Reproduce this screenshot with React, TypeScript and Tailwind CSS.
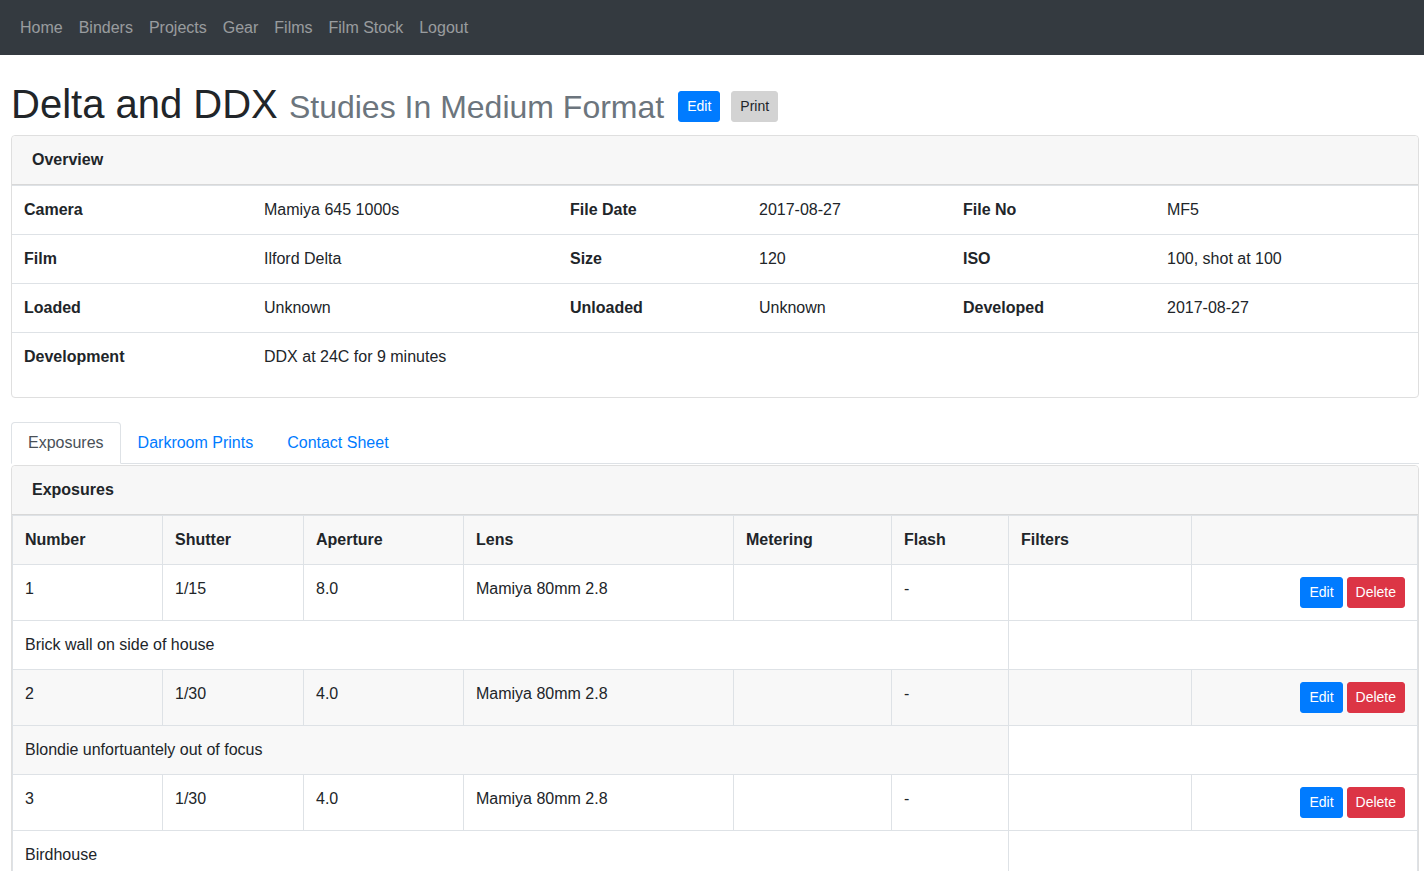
// App.tsx - film roll detail page: overview card + exposures table.
import React from "react";

const navLinks = ["Home", "Binders", "Projects", "Gear", "Films", "Film Stock", "Logout"];

const overview: [string, string, string?, string?, string?, string?][] = [
    ["Camera", "Mamiya 645 1000s", "File Date", "2017-08-27", "File No", "MF5"],
    ["Film", "Ilford Delta", "Size", "120", "ISO", "100, shot at 100"],
    ["Loaded", "Unknown", "Unloaded", "Unknown", "Developed", "2017-08-27"],
    ["Development", "DDX at 24C for 9 minutes"],
];

interface Exposure {
    number: string;
    shutter: string;
    aperture: string;
    lens: string;
    metering: string;
    flash: string;
    filters: string;
    notes: string;
}

const exposures: Exposure[] = [
    { number: "1", shutter: "1/15", aperture: "8.0", lens: "Mamiya 80mm 2.8", metering: "", flash: "-", filters: "", notes: "Brick wall on side of house" },
    { number: "2", shutter: "1/30", aperture: "4.0", lens: "Mamiya 80mm 2.8", metering: "", flash: "-", filters: "", notes: "Blondie unfortuantely out of focus" },
    { number: "3", shutter: "1/30", aperture: "4.0", lens: "Mamiya 80mm 2.8", metering: "", flash: "-", filters: "", notes: "Birdhouse" },
];

const headers = ["Number", "Shutter", "Aperture", "Lens", "Metering", "Flash", "Filters", ""];

// small bootstrap-ish button (1px border in the same colour)
const btn = "rounded-[3px] border px-2 py-1 text-[14px] leading-[21px]";

const Navbar = () => (
    <nav className="flex h-[55px] items-center bg-[#343a40] pl-3">
        {navLinks.map((link) => (
            <a key={link} href="#" className="px-2 text-base leading-6 text-white/50">
                {link}
            </a>
        ))}
    </nav>
);

const OverviewCard = () => (
    <div className="rounded border border-[#dfdfdf] bg-white">
        <div className="rounded-t border-b border-[#d8d8d8] bg-[#f7f7f7] px-5 py-3 font-bold leading-6">
            Overview
        </div>
        <table className="mb-4 w-full table-fixed border-collapse">
            <colgroup>
                <col className="w-[240px]" />
                <col className="w-[306px]" />
                <col className="w-[189px]" />
                <col className="w-[204px]" />
                <col className="w-[204px]" />
                <col />
            </colgroup>
            <tbody>
                {overview.map((row) => (
                    <tr key={row[0]} className="border-t border-[#dee2e6]">
                        {row[0] === "Development" ? (
                            <>
                                <td className="p-3 font-bold">{row[0]}</td>
                                <td className="p-3" colSpan={5}>{row[1]}</td>
                            </>
                        ) : (
                            row.map((cell, i) => (
                                <td key={i} className={`p-3 ${i % 2 === 0 ? "font-bold" : ""}`}>
                                    {cell}
                                </td>
                            ))
                        )}
                    </tr>
                ))}
            </tbody>
        </table>
    </div>
);

const Tabs = () => (
    <ul className="mt-6 flex border-b border-[#dee2e6]">
        <li className="-mb-px">
            <a href="#" className="block rounded-t border border-[#dee2e6] border-b-white bg-white px-4 py-2 text-[#495057]">
                Exposures
            </a>
        </li>
        <li className="-mb-px">
            <a href="#" className="block border border-transparent px-4 py-2 text-[#007bff]">
                Darkroom Prints
            </a>
        </li>
        <li className="-mb-px">
            <a href="#" className="block border border-transparent px-4 py-2 text-[#007bff]">
                Contact Sheet
            </a>
        </li>
    </ul>
);

const ExposuresCard = () => (
    <div className="mt-px rounded border border-[#dfdfdf] bg-white">
        <div className="rounded-t border-b border-[#d8d8d8] bg-[#f7f7f7] px-5 py-3 font-bold leading-6">
            Exposures
        </div>
        <table className="w-full table-fixed border-collapse border border-[#dee2e6]">
            <colgroup>
                <col className="w-[150px]" />
                <col className="w-[141px]" />
                <col className="w-[160px]" />
                <col className="w-[270px]" />
                <col className="w-[158px]" />
                <col className="w-[117px]" />
                <col className="w-[183px]" />
                <col />
            </colgroup>
            <tbody>
                <tr className="bg-[#f8f8f8]">
                    {headers.map((h, i) => (
                        <th key={i} className="border border-[#dee2e6] p-3 text-left font-bold">
                            {h}
                        </th>
                    ))}
                </tr>
                {exposures.map((e, idx) => {
                    const striped = idx % 2 === 1;
                    return (
                        <React.Fragment key={e.number}>
                            <tr className={striped ? "bg-[#f8f8f8]" : "bg-white"}>
                                {[e.number, e.shutter, e.aperture, e.lens, e.metering, e.flash, e.filters].map((c, i) => (
                                    <td key={i} className="border border-[#dee2e6] p-3 align-top">
                                        {c}
                                    </td>
                                ))}
                                <td className="border border-[#dee2e6] p-3 align-top">
                                    <div className="flex justify-end gap-1">
                                        <button className={`${btn} border-[#007bff] bg-[#007bff] text-white`}>Edit</button>
                                        <button className={`${btn} border-[#dc3545] bg-[#dc3545] text-white`}>Delete</button>
                                    </div>
                                </td>
                            </tr>
                            <tr>
                                <td colSpan={6} className={`border border-[#dee2e6] p-3 ${striped ? "bg-[#f8f8f8]" : "bg-white"}`}>
                                    {e.notes}
                                </td>
                                <td colSpan={2} className="border border-[#dee2e6] bg-white p-3"></td>
                            </tr>
                        </React.Fragment>
                    );
                })}
            </tbody>
        </table>
    </div>
);

export default function App() {
    return (
        <div className="min-h-screen bg-white text-base leading-6 text-[#212529] [font-family:'Liberation_Sans',Arial,sans-serif]">
            <Navbar />
            <div className="pl-[11px] pr-[5px] pb-8">
                {/* title row */}
                <div className="mt-[25px] mb-[7px] flex items-start">
                    <h1 className="text-[40px] leading-[48px] font-normal">
                        Delta and DDX <small className="text-[32px] leading-none text-[#6c757d]">Studies In Medium Format</small>
                    </h1>
                    <button className={`${btn} ml-[14px] mt-[11px] border-[#007bff] bg-[#007bff] text-white`}>Edit</button>
                    <button className={`${btn} ml-[11px] mt-[11px] border-[#d3d3d3] bg-[#d3d3d3] text-[#212529]`}>Print</button>
                </div>
                <OverviewCard />
                <Tabs />
                <ExposuresCard />
            </div>
        </div>
    );
}
